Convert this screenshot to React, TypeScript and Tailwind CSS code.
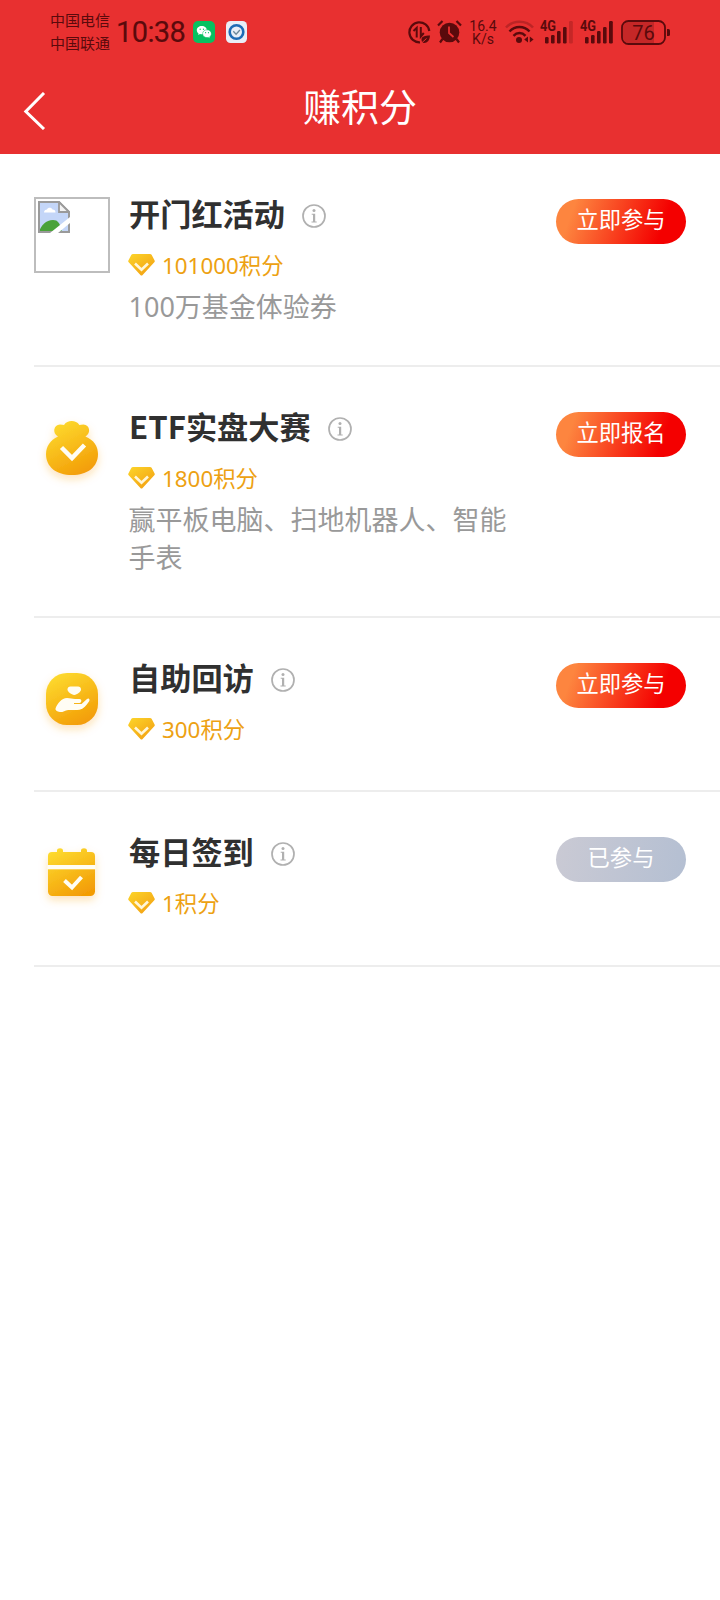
import React from "react";

type IconKind = "broken" | "bag" | "hand" | "calendar";

interface Task {
  id: number;
  icon: IconKind;
  title: string;
  points: string;
  desc?: string;
  action: string;
  done?: boolean;
  height: string;
}

const tasks: Task[] = [
  {
    id: 1,
    icon: "broken",
    title: "开门红活动",
    points: "101000积分",
    desc: "100万基金体验券",
    action: "立即参与",
    height: "h-[213px]",
  },
  {
    id: 2,
    icon: "bag",
    title: "ETF实盘大赛",
    points: "1800积分",
    desc: "赢平板电脑、扫地机器人、智能手表",
    action: "立即报名",
    height: "h-[251px]",
  },
  {
    id: 3,
    icon: "hand",
    title: "自助回访",
    points: "300积分",
    action: "立即参与",
    height: "h-[174px]",
  },
  {
    id: 4,
    icon: "calendar",
    title: "每日签到",
    points: "1积分",
    action: "已参与",
    done: true,
    height: "h-[175px]",
  },
];

const Signal: React.FC<{ weak?: boolean }> = ({ weak }) => (
  <svg className="-mt-[4px]" width="34" height="28" viewBox="0 -4 34 28" fill="#5a0a0c">
    <text x="0" y="11" fontSize="14" fontWeight="700" fontFamily="Roboto, sans-serif" textLength="16" lengthAdjust="spacingAndGlyphs">
      4G
    </text>
    <rect x="5" y="17" width="3.6" height="6.5" rx="1.2" />
    <rect x="11" y="15" width="3.6" height="8.5" rx="1.2" />
    <rect x="17" y="11" width="3.6" height="12.5" rx="1.2" />
    <rect x="23" y="7" width="3.6" height="16.5" rx="1.2" />
    <rect x="29" y="1" width="3.8" height="22.5" rx="1.2" opacity={weak ? 0.25 : 1} />
  </svg>
);

const StatusBar: React.FC = () => (
  <div className="flex h-[64px] items-center pl-[50px] pr-[49px] text-[#5a0a0c]">
    <div className="-mt-[3px] w-[60px] text-[15px] leading-[23px]">
      <div>中国电信</div>
      <div>中国联通</div>
    </div>
    <div className="mt-px ml-[6px] w-[71px] whitespace-nowrap font-[Roboto] text-[29px] leading-none tracking-[-0.6px] [-webkit-text-stroke:0.15px_#5a0a0c]">
      10:38
    </div>
    {/* WeChat */}
    <svg className="ml-[6px]" width="22" height="22" viewBox="0 0 22 22">
      <rect width="22" height="22" rx="5" fill="#07c160" />
      <path d="M8.8 5C5.9 5 3.8 6.9 3.8 9.2c0 1.4.7 2.5 1.8 3.3l-.5 1.6 1.9-1c.6.2 1.2.2 1.8.2 2.9 0 5-1.8 5-4.1S11.7 5 8.8 5z" fill="#fff" />
      <path d="M14 8.8c-2.5 0-4.4 1.7-4.4 3.9s1.9 3.9 4.4 3.9c.5 0 1-.1 1.5-.2l1.6.8-.4-1.4c1-.7 1.6-1.8 1.6-3.1 0-2.2-1.9-3.9-4.3-3.9z" fill="#fff" stroke="#07c160" strokeWidth=".5" />
      <g fill="#07c160">
        <circle cx="7.2" cy="8.2" r=".7" />
        <circle cx="10.5" cy="8.2" r=".7" />
        <circle cx="12.6" cy="11.7" r=".6" />
        <circle cx="15.5" cy="11.7" r=".6" />
      </g>
    </svg>
    <svg className="ml-[11px]" width="21" height="22" viewBox="0 0 21 22">
      <rect width="21" height="22" rx="4.5" fill="#e9eef7" />
      <circle cx="10.5" cy="11" r="6.8" fill="none" stroke="#1e6bb5" strokeWidth="2.6" />
      <path d="M7.3 10.2l2.8 3 3.8-4.2" fill="none" stroke="#6c8798" strokeWidth="1.3" />
    </svg>

    <div className="ml-auto flex items-center">
      <svg width="23" height="23" viewBox="0 0 23 23" fill="none" stroke="#5a0a0c" strokeWidth="2.2">
        <path d="M21.3 10A10 10 0 1 0 12 21.3" />
        <path d="M5.5 10l3.2-3.2V16.500M12.800 6v9.500l3-3.500" strokeWidth="2" />
        <path d="M13.500 18.500c0-3 3-4 8.500-4-.2 4.500-2.500 7.500-6 7.500-1.500 0-2.500-1.500-2.500-3.500z" fill="#5a0a0c" stroke="none" />
        <path d="M13 22.500l5.500-5" stroke="#e83030" strokeWidth="1" />
      </svg>
      <svg className="ml-[6px]" width="25" height="24" viewBox="0 0 25 24" fill="#5a0a0c">
        <circle cx="12.5" cy="12.5" r="9.8" />
        <path d="M1 5.500L5.500 1M24 5.500L19.500 1M5.500 19l-2.500 3.500M19.500 19l2.500 3.500" stroke="#5a0a0c" strokeWidth="2.2" />
        <path d="M12 6.500V13l4.500 4" fill="none" stroke="#e83030" strokeWidth="1.8" />
      </svg>
      <div className="mt-[2px] ml-[7px] flex w-[28px] flex-col items-center font-[Roboto] text-[14px] leading-[13px]">
        <div>16.4</div>
        <div>K/s</div>
      </div>
      <svg className="ml-[8px]" width="29" height="24" viewBox="0 0 29 24" fill="none" stroke="#5a0a0c" strokeWidth="2.5">
        <path d="M1 7.500C8-.3 21-.3 28 7.500" opacity=".3" />
        <path d="M4.500 11.500c5.500-6 14.500-6 20 0" />
        <path d="M8.500 15.800c3.500-3.600 8.500-3.600 12 0" />
        <circle cx="14" cy="20" r="3" fill="#5a0a0c" stroke="none" />
        <path d="M23 16.500v6l-3.800-3zM24.800 16.500v6l3.800-3z" fill="#5a0a0c" stroke="none" />
      </svg>
      <div className="ml-[6px] flex gap-[6px]">
        <Signal weak />
        <Signal />
      </div>
      <svg className="ml-[7px]" width="50" height="25" viewBox="0 0 50 25">
        <path d="M8 2h25v21H8a6 6 0 0 1-6-6V8a6 6 0 0 1 6-6z" fill="#5a0a0c" opacity=".25" />
        <rect x="1" y="1" width="43" height="23" rx="6.5" fill="none" stroke="#5a0a0c" strokeWidth="1.8" />
        <path d="M46 9h1.500a1.500 1.500 0 0 1 1.500 1.500v4a1.500 1.500 0 0 1-1.500 1.500H46z" fill="#5a0a0c" />
        <text x="22.5" y="19.5" fontSize="20" fontFamily="Roboto, sans-serif" textAnchor="middle" fill="#5a0a0c">
          76
        </text>
      </svg>
    </div>
  </div>
);

const Header: React.FC = () => (
  <header className="h-[154px] bg-[#e83030]">
    <StatusBar />
    <div className="grid h-[86px] grid-cols-[60px_1fr_60px] items-center text-white">
      <svg className="mt-[7px] ml-[23px]" width="24" height="38" viewBox="0 0 24 38" fill="none" stroke="#fff" strokeWidth="3">
        <path d="M21 1L2.800 19.500 21 37" />
      </svg>
      <h1 className="-mt-[5px] text-center text-[38px] leading-none">赚积分</h1>
    </div>
  </header>
);

const BrokenImage: React.FC = () => (
  <div className="size-[76px] border-2 border-[#bdbdbd] p-[2px]">
    <svg width="32" height="32" viewBox="0 0 32 32">
      <path d="M1 1h20l10 10v20H1z" fill="#c4d6f8" />
      <path d="M6 11.500c0-2 1.500-3 3-3 .5-2 4.500-2.500 5.500 0 2 0 3 1.300 3 3z" fill="#fff" />
      <path d="M1 31c2-7 7-12 14-12 5 0 7 3 9 12z" fill="#4aa23a" />
      <path d="M1 1h20l10 10v20H1z" fill="none" stroke="#9a9a9a" strokeWidth="2" />
      <path d="M21 1v10h10z" fill="#f3f3f3" stroke="#9a9a9a" strokeWidth="1.8" />
      <path d="M32 16v6L20 32h-8z" fill="#fff" />
    </svg>
  </div>
);

const TaskIcon: React.FC<{ kind: IconKind }> = ({ kind }) => {
  if (kind === "broken") return <BrokenImage />;
  return (
    <svg width="76" height="76" viewBox="0 0 76 76" className="overflow-visible">
      <defs>
        <linearGradient id={`gold-${kind}`} x1="0.2" y1="0" x2="0.7" y2="1">
          <stop offset="0" stopColor="#fddb2f" />
          <stop offset="1" stopColor="#f39c06" />
        </linearGradient>
        <filter id={`glow-${kind}`} x="-30%" y="-30%" width="160%" height="170%">
          <feDropShadow dx="0" dy="4" stdDeviation="4" floodColor="#f7a01c" floodOpacity=".3" />
        </filter>
      </defs>
      {kind === "bag" && (
        <>
          <path
            d="M24 26.500c-6-3.500-4.500-11.500 2-12 1.500 0 3 .2 4 .5 2-3 4.500-4 7.700-4s5.700 1 7.700 4c1-.3 2.500-.5 4-.5 6.500.5 8 8.500 2 12C60 30 64 36.500 64 44c0 13-10.500 21-26 21S12 57 12 44c0-7.500 4-13.500 12-17.500z"
            fill="url(#gold-bag)"
            filter="url(#glow-bag)"
          />
          <path d="M27.500 37.500L38 48l12.500-13" fill="none" stroke="#fffdf4" strokeWidth="4.5" />
        </>
      )}
      {kind === "hand" && (
        <>
          <rect x="12" y="12" width="52" height="52" rx="21" fill="url(#gold-hand)" filter="url(#glow-hand)" />
          <g fill="#fffdf4">
            <path d="M36.500 25.500h7.500c1.800 0 3 1.300 3 3 0 2.500-4 5-6.800 5.500-2.700-.5-6.700-3-6.700-5.500 0-1.700 1.200-3 3-3z" />
            <path d="M21.500 47.500c2-5 6-10.500 11.500-10.500 3.500 0 5 1 8 1h4.500c2.500 0 2.500 3.500 0 4H40v1h7.500l5.500-5c2-1.500 3.300.5 2 2.500-2.500 3.500-5.500 7.500-9.500 8.300-5 .7-10-.3-13.500.7-2 .5-3.500 2-6 1.500-3-.5-5-1.500-4.500-3.500z" />
          </g>
        </>
      )}
      {kind === "calendar" && (
        <>
          <path
            d="M18 17h5v-1.500c0-3 6-3 6 0V17h18v-1.500c0-3 6-3 6 0V17h4a4 4 0 0 1 4 4v35.500a4.500 4.500 0 0 1-4.500 4.500h-38a4.500 4.500 0 0 1-4.500-4.500V21a4 4 0 0 1 4-4z"
            fill="url(#gold-calendar)"
            filter="url(#glow-calendar)"
          />
          <rect x="13.5" y="30" width="48" height="4.3" fill="#fffdf4" />
          <path d="M30.500 45.500l7.500 7 9.500-10.500" fill="none" stroke="#fffdf4" strokeWidth="4" />
        </>
      )}
    </svg>
  );
};

const Gem: React.FC = () => (
  <svg width="27" height="22" viewBox="0 0 27 22">
    <defs>
      <linearGradient id="gem" x1="0" y1="0" x2="0.8" y2="1">
        <stop offset="0" stopColor="#fcd52a" />
        <stop offset="1" stopColor="#f3a012" />
      </linearGradient>
    </defs>
    <path d="M5 0h17q1 0 1.600.8L26.600 6.500q.5 1-.3 1.800L14.600 21q-1.100 1-2.200 0L.7 8.300Q-.1 7.500.4 6.500L3.400.8Q4 0 5 0z" fill="url(#gem)" />
    <path d="M7 9.500l6.500 6.300L20 9.500" fill="none" stroke="#fff6d8" strokeWidth="2.6" />
  </svg>
);

const InfoIcon: React.FC = () => (
  <svg width="24" height="24" viewBox="0 0 24 24" fill="#b0b0b0">
    <circle cx="12" cy="12" r="11" fill="none" stroke="#b0b0b0" strokeWidth="1.7" />
    <circle cx="12" cy="6.5" r="1.5" />
    <path d="M9.700 9.700h3.500v7.800H14.700v1H9.500v-1H11v-6.800H9.700z" />
  </svg>
);

const TaskRow: React.FC<{ task: Task }> = ({ task }) => (
  <li className={`ml-[34px] flex border-b-2 border-[#ededed] pr-[34px] ${task.height}`}>
    <div className="mt-[43px] shrink-0">
      <TaskIcon kind={task.icon} />
    </div>
    <div className="ml-[18px] w-[386px] pt-[36px]">
      <div className="flex h-[46px] items-center pl-px">
        <h2 className="text-[31.2px] leading-[46px] font-bold text-[#303030]">{task.title}</h2>
        <span className="mt-[6px] ml-[17px]">
          <InfoIcon />
        </span>
      </div>
      <div className="mt-[12px] flex h-[34px] items-center font-['Noto_Sans','Noto_Sans_CJK_SC',sans-serif]">
        <Gem />
        <span className="mt-[2px] ml-[7px] text-[22.4px] leading-[34px] text-[#eda112]">{task.points}</span>
      </div>
      {task.desc && (
        <p className="mt-[6px] pl-[0.5px] font-['Noto_Sans','Noto_Sans_CJK_SC',sans-serif] text-[27px] leading-[38px] text-[#999]">
          {task.desc}
        </p>
      )}
    </div>
    <button
      className={`mt-[45px] ml-auto flex h-[45px] w-[130px] items-center justify-center rounded-full pb-[6px] text-[22.3px] leading-none text-white ${
        task.done
          ? "bg-[linear-gradient(100deg,#cacad4,#b4bfd2)]"
          : "bg-[linear-gradient(110deg,#fd853f_14%,#f40000_80%)]"
      }`}
    >
      {task.action}
    </button>
  </li>
);

const App: React.FC = () => {
  return (
    <div className="min-h-[1600px] w-[720px] bg-white font-['Noto_Sans_CJK_SC',sans-serif]">
      <Header />
      <ul>
        {tasks.map((task) => (
          <TaskRow key={task.id} task={task} />
        ))}
      </ul>
    </div>
  );
};

export default App;
